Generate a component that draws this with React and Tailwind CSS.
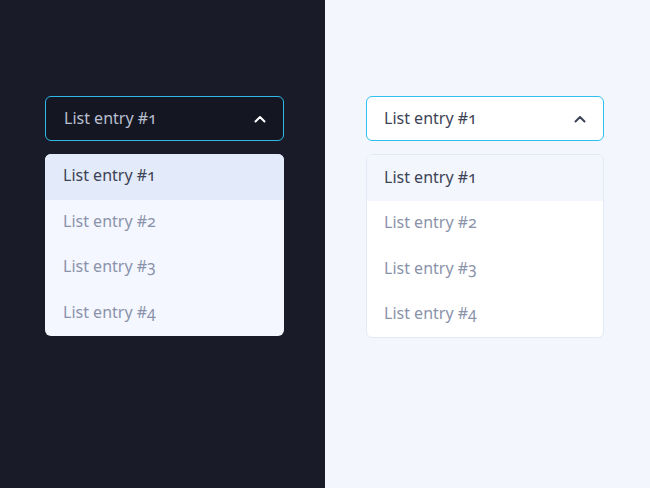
import React from "react";

function Chevron({ color }) {
  return (
    <svg width="12" height="8" viewBox="0 0 12 8" fill="none">
      <path d="M1.5 6.5 L6 2 L10.5 6.5" stroke={color} strokeWidth="2" strokeLinecap="round" strokeLinejoin="round" />
    </svg>
  );
}

const items = ["List entry #1", "List entry #2", "List entry #3", "List entry #4"];

export default function App() {
  return (
    <div className="flex w-[650px] h-[488px] overflow-hidden oldstyle-nums font-[370]" style={{ fontFamily: '"Noto Sans", "Open Sans", sans-serif' }}>
      <div className="w-[325px] h-full bg-[#191c28] pl-[45px] pt-[96px]">
        <div className="w-[239px]">
          <div className="h-[45px] flex items-center justify-between pl-[18px] pr-[17px] rounded-[6px] border border-[#2fb8ea] bg-[#141722]">
            <span className="text-[16px] leading-[20px] pb-[2px] text-[#b9bfcf]">List entry #1</span>
            <Chevron color="#ffffff" />
          </div>
          <div className="mt-[13px] rounded-[6px] overflow-hidden bg-[#f4f7ff]">
            {items.map((t, i) => (
              <div key={t} className={`h-[45.5px] flex items-center pl-[18px] pb-[3px] text-[16px] ${i === 0 ? "bg-[#e3eaf9] text-[#3d4356]" : "text-[#8b93ab]"}`}>
                {t}
              </div>
            ))}
          </div>
        </div>
      </div>
      <div className="flex-1 h-full bg-[#f3f7fd] pl-[41px] pt-[96px]">
        <div className="w-[238px]">
          <div className="h-[45px] flex items-center justify-between pl-[17px] pr-[17px] rounded-[6px] border border-[#2fc0ef] bg-white">
            <span className="text-[16px] leading-[20px] pb-[2px] text-[#3d4356]">List entry #1</span>
            <Chevron color="#3d4356" />
          </div>
          <div className="mt-[13px] rounded-[6px] overflow-hidden bg-white border border-[#e3eaf5]">
            {items.map((t, i) => (
              <div key={t} className={`h-[45.5px] flex items-center pl-[17px] pb-[2px] text-[16px] ${i === 0 ? "bg-[#f3f7fd] text-[#3d4356]" : "text-[#8b93ab]"}`}>
                {t}
              </div>
            ))}
          </div>
        </div>
      </div>
    </div>
  );
}
